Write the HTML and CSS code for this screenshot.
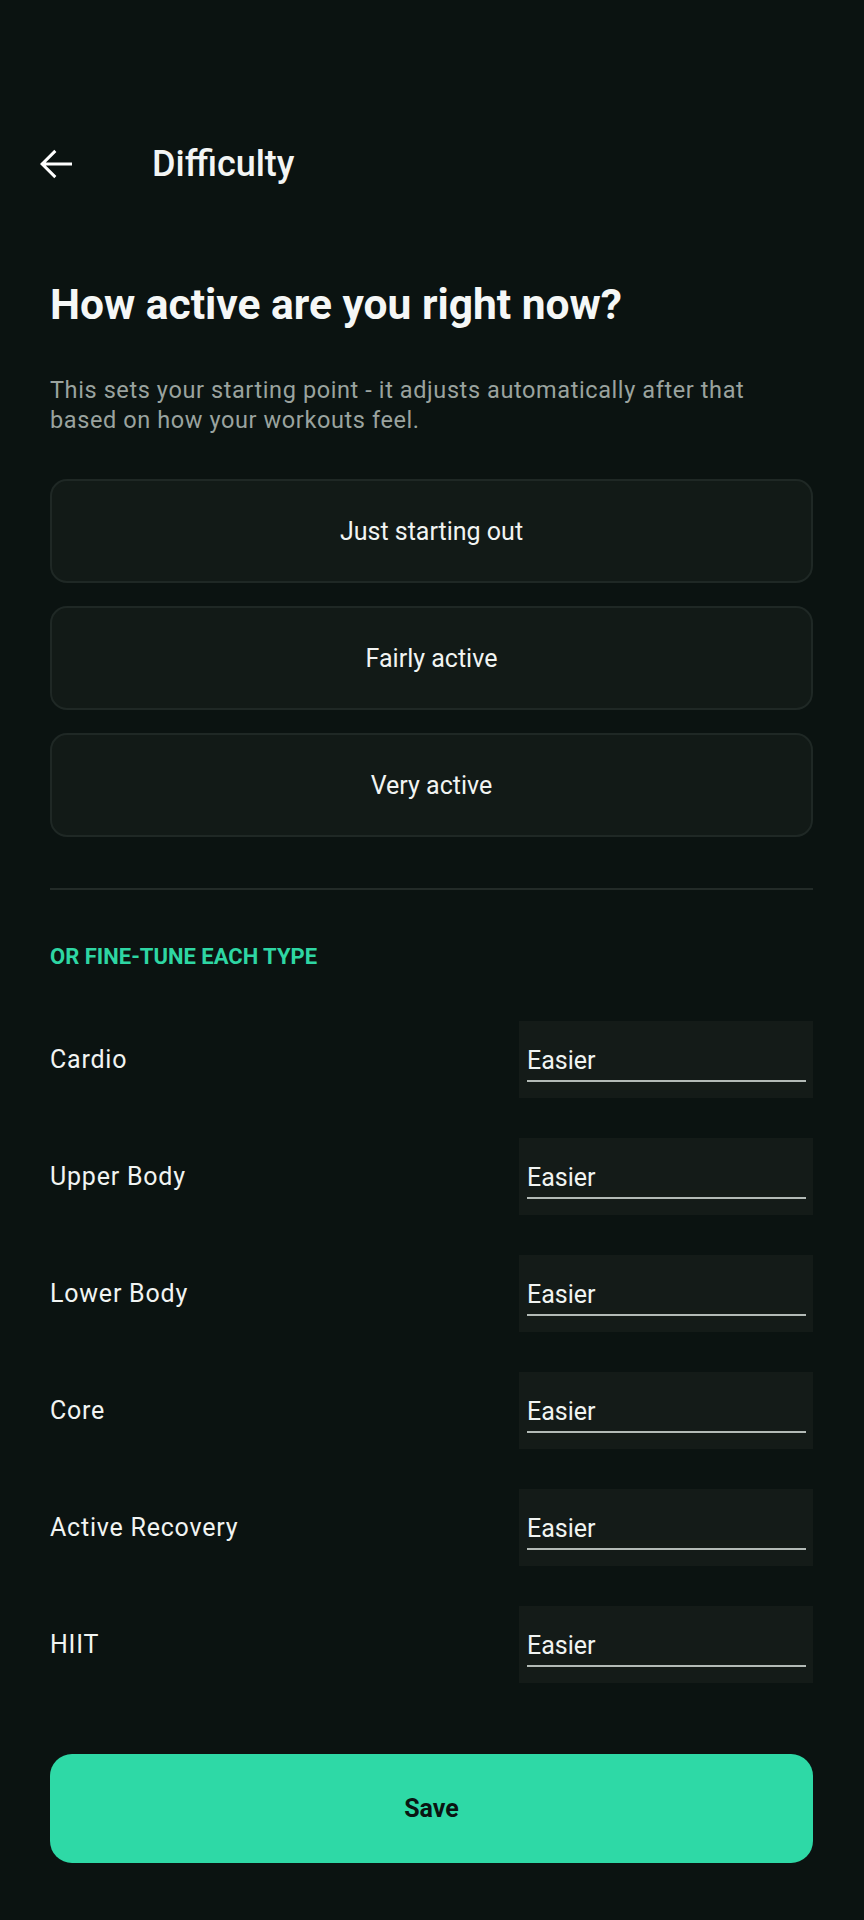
FILE: index.html
```html
<!DOCTYPE html>
<html lang="en">
<head>
<meta charset="utf-8">
<title>Difficulty</title>
<link rel="stylesheet" href="styles.css">
</head>
<body>
<div class="screen">
  <header class="topbar">
    <button class="back" aria-label="Back">
      <svg viewBox="0 0 24 24" width="48" height="48"><path d="M20 11.25H6.9l5.3-5.3-1.06-1.06L4 12l7.14 7.11 1.06-1.06-5.3-5.3H20z" fill="#ffffff"/></svg>
    </button>
    <h1 class="title">Difficulty</h1>
  </header>

  <h2 class="heading">How active are you right now?</h2>
  <p class="desc">This sets your starting point - it adjusts automatically after that based on how your workouts feel.</p>

  <div class="options">
    <button class="option">Just starting out</button>
    <button class="option">Fairly active</button>
    <button class="option">Very active</button>
  </div>

  <div class="divider"></div>

  <div class="section-label">OR FINE-TUNE EACH TYPE</div>

  <div class="rows">
    <div class="row"><span class="row-label">Cardio</span><div class="select"><div class="select-inner">Easier</div></div></div>
    <div class="row"><span class="row-label">Upper Body</span><div class="select"><div class="select-inner">Easier</div></div></div>
    <div class="row"><span class="row-label">Lower Body</span><div class="select"><div class="select-inner">Easier</div></div></div>
    <div class="row"><span class="row-label">Core</span><div class="select"><div class="select-inner">Easier</div></div></div>
    <div class="row"><span class="row-label">Active Recovery</span><div class="select"><div class="select-inner">Easier</div></div></div>
    <div class="row"><span class="row-label">HIIT</span><div class="select"><div class="select-inner">Easier</div></div></div>
  </div>

  <button class="save">Save</button>
</div>
</body>
</html>
```

FILE: styles.css
```css
* { box-sizing: border-box; }
html, body {
  margin: 0;
  padding: 0;
  background: #0b1311;
}
body {
  font-family: Roboto, "Noto Sans", "Liberation Sans", sans-serif;
  color: #eef1ef;
  width: 864px;
  min-height: 1920px;
}
.screen {
  padding: 140px 51px 0 50px;
  display: flex;
  flex-direction: column;
}
.topbar {
  display: flex;
  align-items: center;
  height: 48px;
  margin-left: -18px;
}
.back {
  width: 48px;
  height: 48px;
  padding: 0;
  border: 0;
  background: transparent;
  display: flex;
  align-items: center;
  justify-content: center;
}
.back svg { display: block; }
.title {
  margin: 0 0 0 72px;
  font-size: 36px;
  line-height: 48px;
  font-weight: 500;
  color: #f3f5f4;
}
.heading {
  margin: 91px 0 0;
  font-size: 42.5px;
  line-height: 52px;
  font-weight: 700;
  color: #f5f7f6;
}
.desc {
  margin: 44px 0 0;
  font-size: 23.5px;
  line-height: 30px;
  letter-spacing: 0.6px;
  color: #9aa39f;
}
.options {
  margin-top: 44px;
  display: flex;
  flex-direction: column;
  gap: 23px;
}
.option {
  height: 104px;
  border: 2px solid #1f2825;
  border-radius: 17px;
  background: #121a17;
  color: #f1f4f2;
  font-family: inherit;
  font-size: 25px;
  font-weight: 400;
}
.divider {
  margin-top: 51px;
  height: 2px;
  background: #232b28;
}
.section-label {
  margin-top: 53px;
  font-size: 22px;
  line-height: 28px;
  font-weight: 700;
  color: #2ed6a3;
}
.rows {
  margin-top: 50px;
  display: flex;
  flex-direction: column;
  gap: 40px;
}
.row {
  display: flex;
  align-items: center;
  justify-content: space-between;
  height: 77px;
}
.row-label {
  font-size: 25px;
  letter-spacing: 0.78px;
  color: #f1f4f2;
}
.select {
  width: 294px;
  height: 77px;
  background: #141b18;
  padding: 0 7px 16px 8px;
  display: flex;
  align-items: flex-end;
}
.select-inner {
  width: 100%;
  font-size: 25px;
  line-height: 30px;
  padding-bottom: 4px;
  border-bottom: 2px solid #b3bab6;
  color: #f1f4f2;
}
.save {
  margin-top: 71px;
  height: 109px;
  border: 0;
  border-radius: 22px;
  background: #2ed9a6;
  color: #0a1512;
  font-family: inherit;
  font-size: 25px;
  font-weight: 700;
}
```
